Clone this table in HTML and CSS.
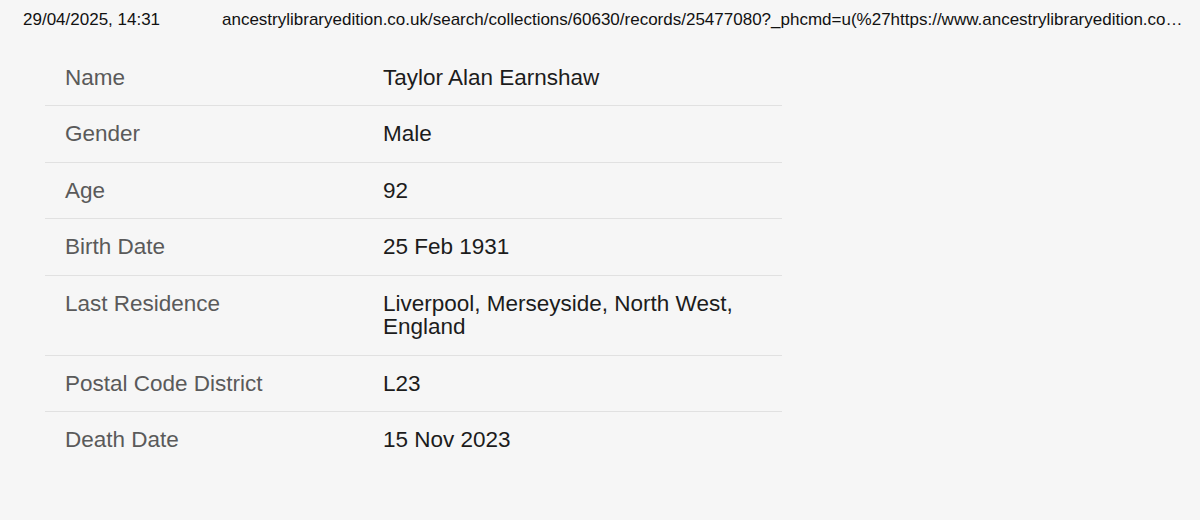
FILE: index.html
```html
<!DOCTYPE html>
<html lang="en">
<head>
<meta charset="utf-8">
<title>Record</title>
<link rel="stylesheet" href="styles.css">
</head>
<body>
<header class="print-header">
  <span class="print-date">29/04/2025, 14:31</span>
  <span class="print-url">ancestrylibraryedition.co.uk/search/collections/60630/records/25477080?_phcmd=u(%27https://www.ancestrylibraryedition.co.uk/search/collections/60630/records/25477080</span>
</header>
<main class="record">
  <div class="row"><div class="label">Name</div><div class="value">Taylor Alan Earnshaw</div></div>
  <div class="row"><div class="label">Gender</div><div class="value">Male</div></div>
  <div class="row"><div class="label">Age</div><div class="value">92</div></div>
  <div class="row"><div class="label">Birth Date</div><div class="value">25 Feb 1931</div></div>
  <div class="row"><div class="label">Last Residence</div><div class="value">Liverpool, Merseyside, North West, England</div></div>
  <div class="row"><div class="label">Postal Code District</div><div class="value">L23</div></div>
  <div class="row last"><div class="label">Death Date</div><div class="value">15 Nov 2023</div></div>
</main>
</body>
</html>
```
FILE: styles.css
```css
html, body {
  margin: 0;
  padding: 0;
  background: #f6f6f6;
  font-family: "Liberation Sans", Arial, Helvetica, sans-serif;
}
.print-header {
  display: flex;
  align-items: baseline;
  padding: 10px 14px 0 23px;
  font-size: 17px;
  line-height: 19.5px;
  color: #111;
  white-space: nowrap;
}
.print-date {
  flex: 0 0 auto;
  width: 199px;
}
.print-url {
  flex: 1 1 auto;
  min-width: 0;
  overflow: hidden;
  text-overflow: ellipsis;
}
.record {
  width: 737px;
  margin: 20px 0 0 45px;
  font-size: 22.5px;
  line-height: 23.5px;
}
.row {
  display: grid;
  grid-template-columns: 318px 1fr;
  align-items: start;
  border-bottom: 1px solid #e1e1e1;
}
.row.last {
  border-bottom: none;
}
.label {
  padding: 16px 20px;
  color: #5a5a5a;
}
.value {
  padding: 16px 20px;
  color: #1c1c1c;
}
```
